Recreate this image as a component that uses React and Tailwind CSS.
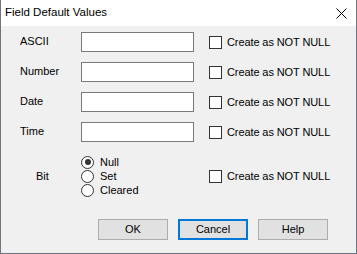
import React from 'react';

const font = { fontFamily: '"Liberation Sans", Arial, sans-serif' };

const NotNull = () => (
  <label className="flex items-center">
    <span className="w-[13px] h-[13px] border border-[#333333] bg-white" />
    <span className="ml-[5px] text-[11px] tracking-[-0.1px] text-black">Create as NOT NULL</span>
  </label>
);

const Radio = ({ label, checked }) => (
  <div className="flex items-center h-[14px]">
    <span className="w-[13px] h-[13px] rounded-full border border-[#333333] bg-white flex items-center justify-center">
      {checked && <span className="w-[6px] h-[6px] rounded-full bg-[#333333]" />}
    </span>
    <span className="ml-[6px] text-[11px] text-black">{label}</span>
  </div>
);

const FieldRow = ({ label }) => (
  <div className="flex items-center h-[20px]">
    <div className="w-[61px] text-[11px] text-black -mt-[2px]">{label}</div>
    <div className="w-[113px] h-[20px] border border-[#7a7a7a] bg-white" />
    <div className="ml-[15px]">
      <NotNull />
    </div>
  </div>
);

export default function App() {
  const fields = ['ASCII', 'Number', 'Date', 'Time'];

  return (
    <div
      className="w-[357px] h-[254px] flex flex-col bg-[#f0f0f0] border-x border-b border-[#6d7580]"
      style={font}
    >
      {/* Title bar */}
      <div className="h-[26px] bg-white flex items-center justify-between pl-[4px] pr-[9px]">
        <span className="text-[11.5px] text-black">Field Default Values</span>
        <svg width="11" height="11" viewBox="0 0 11 11" className="mt-[1px]">
          <path d="M0.5 0.5L10.5 10.5M10.5 0.5L0.5 10.5" stroke="#000" strokeWidth="1" />
        </svg>
      </div>

      {/* Fields */}
      <div className="flex flex-col pl-[19px] pt-[6px] gap-[10px]">
        {fields.map((f) => (
          <FieldRow key={f} label={f} />
        ))}
      </div>

      {/* Bit */}
      <div className="flex items-center pl-[19px] mt-[13px]">
        <div className="w-[61px] pl-[16px] text-[11px] text-black">Bit</div>
        <div className="w-[128px] flex flex-col">
          <Radio label="Null" checked />
          <Radio label="Set" />
          <Radio label="Cleared" />
        </div>
        <NotNull />
      </div>

      {/* Buttons */}
      <div className="flex gap-[10px] pl-[97px] mt-[22px]">
        <button className="w-[70px] h-[21px] bg-[#e1e1e1] border border-[#adadad] text-[11px] text-black">
          OK
        </button>
        <button className="w-[70px] h-[21px] bg-[#e1e1e1] border-2 border-[#0078d7] text-[11px] text-black">
          Cancel
        </button>
        <button className="w-[70px] h-[21px] bg-[#e1e1e1] border border-[#adadad] text-[11px] text-black">
          Help
        </button>
      </div>
    </div>
  );
}
